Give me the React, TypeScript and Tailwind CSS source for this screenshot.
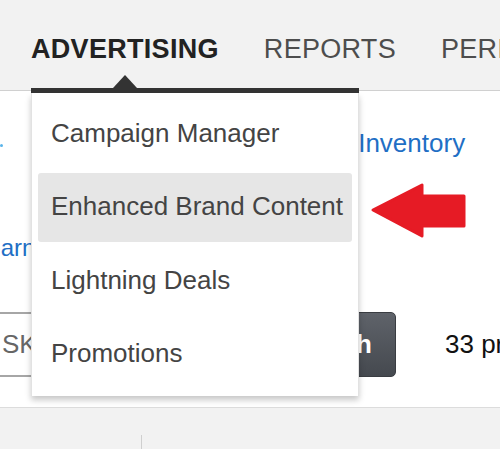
import React from "react";

const items = [
  { label: "Campaign Manager", active: false },
  { label: "Enhanced Brand Content", active: true },
  { label: "Lightning Deals", active: false },
  { label: "Promotions", active: false },
];

export default function App() {
  return (
    <div
      className="relative w-[500px] h-[449px] overflow-hidden bg-white whitespace-nowrap"
      style={{ fontFamily: '"Liberation Sans", Arial, sans-serif' }}
    >
      {/* Header nav */}
      <div className="h-[91px] bg-[#f2f2f2] border-b border-[#d0d0d0]">
        <nav className="flex gap-[45px] pl-[31px] pt-[34px] text-[27px] leading-[30px]">
          <span className="shrink-0 font-bold text-[#222] tracking-[0.3px]">ADVERTISING</span>
          <span className="shrink-0 text-[#4d4d4d] tracking-[0.3px]">REPORTS</span>
          <span className="shrink-0 text-[#4d4d4d] tracking-[0.3px]">PERFORMANCE</span>
        </nav>
      </div>

      {/* Page content (partly under the menu) */}
      <div className="h-[316px] overflow-hidden">
        <div className="flex items-center mt-[38px] h-[29px] text-[26px] leading-[29px]">
          <span className="shrink-0 w-[3px] h-[3px] mt-[4px] rounded-full bg-[#5ab4ea]" />
          <span className="shrink-0 ml-[254px] text-[#1f6fc5]">Manage Inventory</span>
        </div>
        <div className="mt-[76px] h-[27px] text-[24px] leading-[27px] text-[#1f6fc5] ml-[-26px]">
          Learn more
        </div>
        <div className="mt-[51px] flex items-center h-[65px]">
          <div className="shrink-0 ml-[-40px] w-[340px] h-[65px] border-y-2 border-l-2 border-[#a6a6a6] flex items-center pl-[40px] text-[26px] text-[#666]">
            SKU
          </div>
          <button className="shrink-0 w-[96px] h-[65px] rounded-r-[5px] border border-[#3a3d42] bg-gradient-to-b from-[#5f636a] to-[#45494f] flex items-center justify-end pr-[23px] text-[26px] font-bold text-white">
            Search
          </button>
          <span className="shrink-0 ml-[49px] text-[26px] text-[#111]">33 products</span>
        </div>
      </div>

      {/* Bottom strip */}
      <div className="h-[42px] border-t border-[#dcdcdc] bg-[#f2f2f2]">
        <div className="ml-[141px] mt-[27px] w-px h-[20px] bg-[#cfcfcf]" />
      </div>

      {/* Dropdown menu */}
      <div className="absolute left-[31px] top-[88px] w-[328px]">
        <div className="relative h-[5px] bg-[#333]">
          <div className="absolute left-[82px] top-[-13px] w-0 h-0 border-l-[12.5px] border-r-[12.5px] border-b-[13px] border-l-transparent border-r-transparent border-b-[#333]" />
        </div>
        <div className="bg-white border-x border-[#e2e2e2] pt-[6.5px] pb-[7px] px-[6px] flex flex-col gap-[4.5px] shadow-[0_4px_6px_rgba(0,0,0,0.22)]">
          {items.map((it) => (
            <div
              key={it.label}
              className={`h-[69px] flex items-center pl-[13px] pb-[2px] rounded-[3px] text-[26px] leading-[29px] text-[#444] ${
                it.active ? "bg-[#e6e6e6]" : ""
              }`}
            >
              {it.label}
            </div>
          ))}
        </div>
      </div>

      {/* Red annotation arrow */}
      <svg
        className="absolute left-0 top-0"
        width="500"
        height="449"
        viewBox="0 0 500 449"
      >
        <polygon
          points="373,210 422,185 422,196 464,196 464,226 422,226 422,236"
          fill="#e61b25"
          stroke="#e61b25"
          strokeWidth="3"
          strokeLinejoin="round"
        />
      </svg>
    </div>
  );
}
